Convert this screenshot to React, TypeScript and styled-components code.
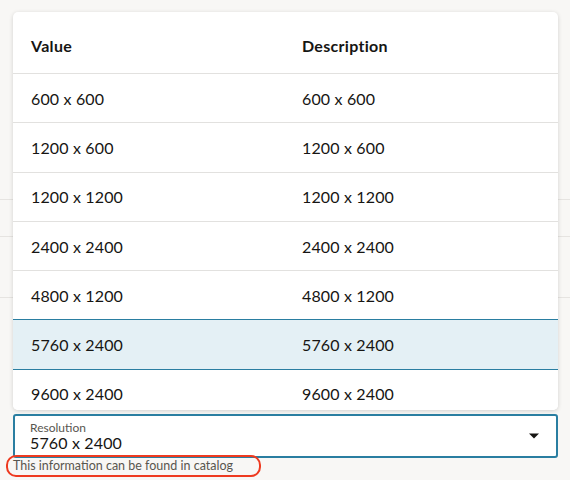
import React from 'react';
import styled, { createGlobalStyle } from 'styled-components';

const rows: string[] = [
  '600 x 600',
  '1200 x 600',
  '1200 x 1200',
  '2400 x 2400',
  '4800 x 1200',
  '5760 x 2400',
  '9600 x 2400',
];

const selected = '5760 x 2400';

const GlobalStyle = createGlobalStyle`
  html, body {
    margin: 0;
    padding: 0;
    background: #f8f7f5;
    font-family: Lato, "Noto Sans", sans-serif;
    color: #161513;
  }
`;

const App = (): JSX.Element => {
  return (
    <Page>
      <GlobalStyle />
      <Backdrop>
        <BackLine $top={199} />
        <BackLine $top={236} />
        <BackLine $top={297} />
      </Backdrop>
      <Popup>
        <HeaderRow>
          <HeadCell>Value</HeadCell>
          <HeadCell>Description</HeadCell>
        </HeaderRow>
        {rows.map((value) => (
          <Row key={value} $selected={value === selected}>
            <Cell>{value}</Cell>
            <Cell>{value}</Cell>
          </Row>
        ))}
      </Popup>
      <Field>
        <FieldText>
          <Label>Resolution</Label>
          <Value>{selected}</Value>
        </FieldText>
        <Arrow viewBox="0 0 12 8" width="12" height="8">
          <path d="M1 1.5h10L6 6.5z" fill="#161513" />
        </Arrow>
      </Field>
      <HelpRow>
        <Help>This information can be found in catalog</Help>
      </HelpRow>
    </Page>
  );
};

const Page = styled.div`
  position: relative;
  width: 570px;
  height: 480px;
  padding: 12px 12px 0 13px;
  box-sizing: border-box;
  overflow: hidden;
`;

const Backdrop = styled.div`
  position: absolute;
  inset: 0;
  z-index: 0;
`;

const BackLine = styled.div<{ $top: number }>`
  position: absolute;
  left: 0;
  right: 0;
  top: ${(p) => p.$top}px;
  height: 1px;
  background: #e6e4e1;
`;

const Popup = styled.div`
  position: relative;
  z-index: 1;
  width: 545px;
  height: 398px;
  background: #fff;
  border-radius: 5px;
  box-shadow: 0 1px 4px rgba(0, 0, 0, 0.16);
  overflow: hidden;
`;

const HeaderRow = styled.div`
  display: grid;
  grid-template-columns: 271px 1fr;
  height: 62px;
  box-sizing: border-box;
  padding: 6px 0 0 18px;
  align-items: center;
  border-bottom: 1px solid #e2e1df;
`;

const HeadCell = styled.div`
  font-size: 16px;
  font-weight: 700;
  letter-spacing: 0.3px;
`;

const Row = styled.div<{ $selected?: boolean }>`
  display: grid;
  grid-template-columns: 271px 1fr;
  height: 48.3px;
  align-items: center;
  padding-left: 18px;
  border-bottom: 1px solid ${(p) => (p.$selected ? '#2a7ea1' : '#e2e1df')};
  margin-top: ${(p) => (p.$selected ? '-1px' : '0')};
  border-top: ${(p) => (p.$selected ? '1px solid #2a7ea1' : 'none')};
  background: ${(p) => (p.$selected ? '#e4f0f5' : '#fff')};
`;

const Cell = styled.div`
  font-size: 16px;
  letter-spacing: 0.15px;
`;

const Field = styled.div`
  position: relative;
  z-index: 1;
  margin-top: 4px;
  width: 545px;
  height: 44px;
  box-sizing: border-box;
  border: 2px solid #2a7ea1;
  border-radius: 3px;
  background: #fff;
  display: flex;
  align-items: center;
  justify-content: space-between;
  padding: 0 16px 0 15px;
`;

const FieldText = styled.div`
  display: flex;
  flex-direction: column;
`;

const Label = styled.div`
  font-size: 12px;
  color: #58564f;
  line-height: 13px;
`;

const Value = styled.div`
  font-size: 16px;
  line-height: 17px;
  letter-spacing: 0.15px;
`;

const Arrow = styled.svg`
  display: block;
`;

const HelpRow = styled.div`
  position: relative;
  z-index: 1;
  display: flex;
  margin: 0 0 0 -7px;
`;

const Help = styled.div`
  font-size: 12.5px;
  color: #58564f;
  line-height: 18px;
  padding: 0 26px 0 5px;
  border: 2px solid #ee3a20;
  border-radius: 10px;
  margin-top: -3px;
`;

export default App;
